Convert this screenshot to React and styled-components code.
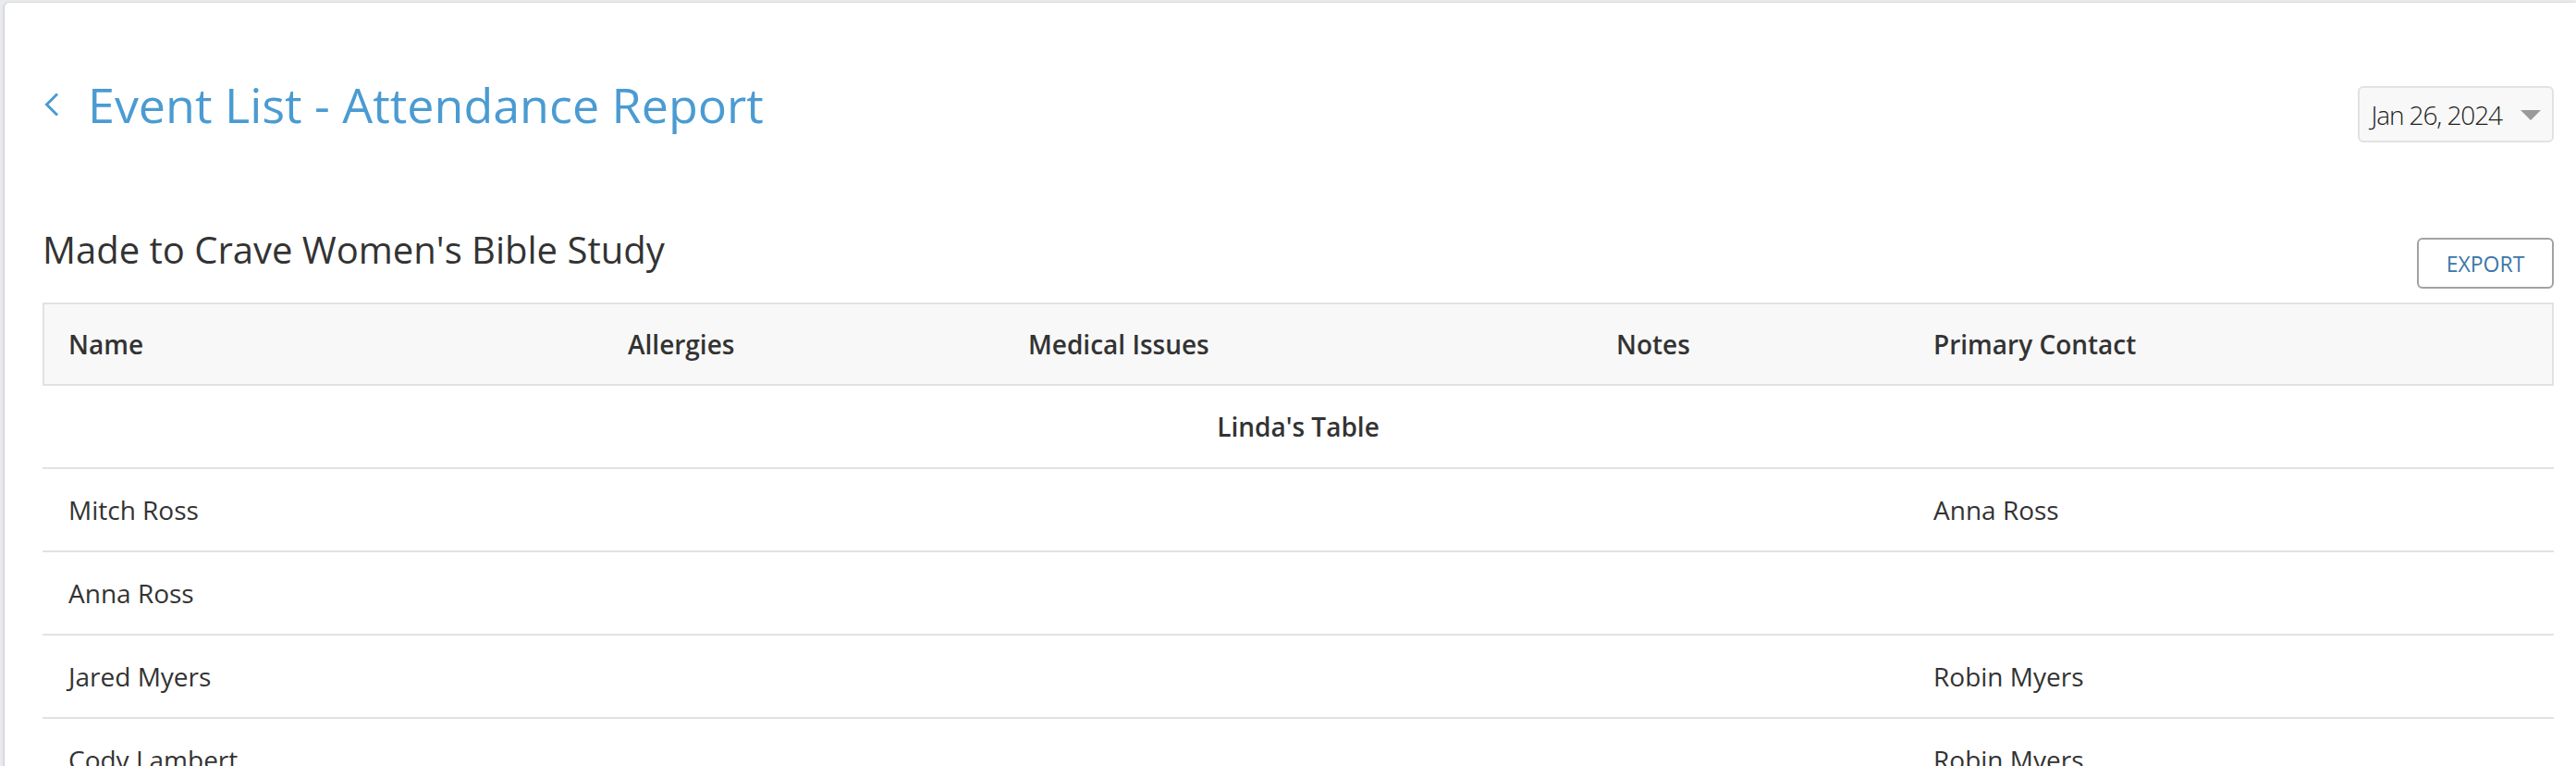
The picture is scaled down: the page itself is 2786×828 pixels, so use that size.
import React from "react";
import styled, { createGlobalStyle } from "styled-components";

const GlobalStyle = createGlobalStyle`
  html, body {
    margin: 0;
    padding: 0;
    background: #e9ebee;
    font-family: "Open Sans", "Noto Sans", sans-serif;
    color: #333333;
    overflow: hidden;
  }
  * { box-sizing: border-box; }
`;

const Page = styled.div`
  padding: 3px 0 0 5px;
  min-height: 828px;
`;

const Card = styled.div`
  background: #ffffff;
  border-radius: 5px 0 0 0;
  box-shadow: -1px 0 3px rgba(0, 0, 0, 0.14);
  padding: 79px 24px 0 41px;
  min-height: 825px;
`;

const TitleRow = styled.div`
  display: flex;
  justify-content: space-between;
  align-items: flex-start;
`;

const TitleGroup = styled.div`
  display: flex;
  align-items: center;
`;

const BackLink = styled.a`
  display: flex;
  align-items: center;
  margin-left: 2px;
  color: #4b9bd2;
  cursor: pointer;
`;

const Title = styled.h1`
  margin: 0 0 0 31px;
  font-size: 52px;
  line-height: 62px;
  font-weight: 400;
  color: #4b9bd2;
`;

const DateSelect = styled.div`
  margin-top: 11px;
  height: 61px;
  display: flex;
  align-items: center;
  gap: 20px;
  padding: 0 12px;
  background: #f8f8f8;
  border: 2px solid #e2e2e2;
  border-radius: 6px;
  font-size: 28px;
  font-weight: 300;
  letter-spacing: -1.1px;
  color: #222222;
`;

const Caret = styled.span`
  width: 0;
  height: 0;
  border-left: 11px solid transparent;
  border-right: 11px solid transparent;
  border-top: 11px solid #9a9a9a;
  margin-top: 2px;
`;

const SectionRow = styled.div`
  margin-top: 92px;
  display: flex;
  justify-content: space-between;
  align-items: flex-end;
`;

const Heading = styled.h2`
  margin: 0 0 18px 0;
  font-size: 40px;
  line-height: 48px;
  font-weight: 400;
  color: #333333;
`;

const ExportButton = styled.button`
  width: 148px;
  height: 55px;
  background: #ffffff;
  border: 2px solid #a2a2a2;
  border-radius: 6px;
  font-family: "Open Sans", sans-serif;
  font-size: 23px;
  color: #3b77a8;
  text-transform: uppercase;
  padding: 0;
  cursor: pointer;
`;

const Table = styled.div`
  margin-top: 15px;
`;

const Row = styled.div`
  display: grid;
  grid-template-columns: ${(p) => (p.$head ? "603px" : "605px")} 433px 636px 343px 1fr;
  height: 90px;
  align-items: center;
  border-bottom: 2px solid #e2e2e2;
  ${(p) =>
    p.$head &&
    `
    background: #f8f8f8;
    border: 2px solid #e2e2e2;
  `}
`;

const Cell = styled.div`
  padding-left: ${(p) => (p.$first && p.$head ? "26px" : "28px")};
  font-size: 28px;
  font-weight: ${(p) => (p.$head ? 600 : 400)};
  color: #333333;
  white-space: nowrap;
`;

const GroupRow = styled.div`
  height: 90px;
  display: flex;
  align-items: center;
  justify-content: center;
  border-bottom: 2px solid #e2e2e2;
  font-size: 28px;
  font-weight: 600;
  color: #333333;
`;

const columns = ["Name", "Allergies", "Medical Issues", "Notes", "Primary Contact"];

const people = [
  { name: "Mitch Ross", contact: "Anna Ross" },
  { name: "Anna Ross", contact: "" },
  { name: "Jared Myers", contact: "Robin Myers" },
  { name: "Cody Lambert", contact: "Robin Myers" },
];

function ChevronLeft() {
  return (
    <svg width="16" height="26" viewBox="0 0 16 26" fill="none">
      <polyline
        points="14,1.5 2.5,13 14,24.5"
        stroke="currentColor"
        strokeWidth="3"
        strokeLinecap="butt"
        strokeLinejoin="miter"
      />
    </svg>
  );
}

export default function App() {
  return (
    <>
      <GlobalStyle />
      <Page>
        <Card>
          <TitleRow>
            <TitleGroup>
              <BackLink>
                <ChevronLeft />
              </BackLink>
              <Title>Event List - Attendance Report</Title>
            </TitleGroup>
            <DateSelect>
              <span>Jan 26, 2024</span>
              <Caret />
            </DateSelect>
          </TitleRow>

          <SectionRow>
            <Heading>Made to Crave Women's Bible Study</Heading>
            <ExportButton>Export</ExportButton>
          </SectionRow>

          <Table>
            <Row $head>
              {columns.map((c, i) => (
                <Cell key={c} $head $first={i === 0}>
                  {c}
                </Cell>
              ))}
            </Row>
            <GroupRow>Linda's Table</GroupRow>
            {people.map((p) => (
              <Row key={p.name}>
                <Cell>{p.name}</Cell>
                <Cell />
                <Cell />
                <Cell />
                <Cell>{p.contact}</Cell>
              </Row>
            ))}
          </Table>
        </Card>
      </Page>
    </>
  );
}
